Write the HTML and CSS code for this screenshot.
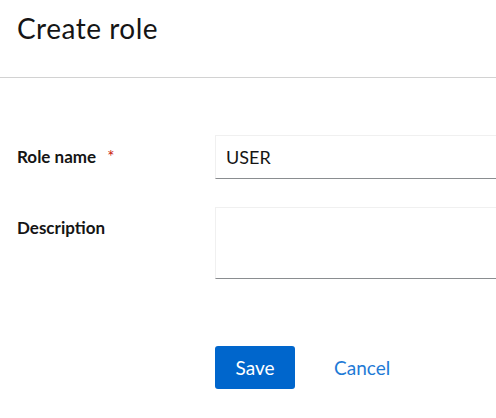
FILE: index.html
```html
<!DOCTYPE html>
<html lang="en">
<head>
<meta charset="utf-8">
<title>Create role</title>
<link rel="stylesheet" href="styles.css">
</head>
<body>
<header class="page-header">
  <h1 class="title">Create role</h1>
</header>
<main class="page-body">
  <form class="form">
    <div class="row">
      <label class="label" for="role-name">Role name <span class="req">*</span></label>
      <input class="input" id="role-name" type="text" value="USER">
    </div>
    <div class="row row-top">
      <label class="label" for="desc">Description</label>
      <textarea class="textarea" id="desc"></textarea>
    </div>
    <div class="actions">
      <button type="button" class="btn btn-primary">Save</button>
      <button type="button" class="btn btn-link">Cancel</button>
    </div>
  </form>
</main>
</body>
</html>
```
FILE: styles.css
```css
html, body {
  margin: 0;
  padding: 0;
  overflow: hidden;
  background: #fff;
  font-family: Lato, "Open Sans", sans-serif;
  color: #151515;
}
.page-header {
  height: 77px;
  border-bottom: 1px solid #d2d2d2;
  padding: 0 17px;
}
.title {
  margin: 0;
  padding-top: 10px;
  font-size: 28px;
  font-weight: 400;
  letter-spacing: 0.5px;
  line-height: 36px;
}
.page-body {
  padding: 57px 0 0 17px;
}
.form {
  display: flex;
  flex-direction: column;
  gap: 28px;
}
.row {
  display: grid;
  grid-template-columns: 198px 400px;
  align-items: center;
}
.row-top {
  align-items: start;
}
.row-top .label {
  padding-top: 9px;
}
.label {
  font-size: 17px;
  font-weight: 700;
  line-height: 24px;
}
.req {
  color: #c9190b;
  margin-left: 7px;
  font-weight: 400;
}
.input, .textarea {
  box-sizing: border-box;
  width: 400px;
  margin: 0;
  border: 1px solid #f0f0f0;
  border-bottom-color: #8a8d90;
  background: #fff;
  font-family: inherit;
  font-size: 18px;
  color: #151515;
  padding: 0 10px;
  outline: none;
}
.input {
  height: 44px;
}
.textarea {
  height: 72px;
  resize: none;
  display: block;
}
.actions {
  display: flex;
  margin-top: 39px;
  margin-left: 198px;
  align-items: center;
}
.btn {
  font-family: inherit;
  font-size: 19px;
  border: 0;
  height: 43px;
  border-radius: 3px;
  cursor: pointer;
}
.btn-primary {
  width: 80px;
  background: #0066cc;
  color: #fff;
}
.btn-link {
  background: transparent;
  color: #1f7ad6;
  padding: 0 20px;
  margin-left: 19px;
}
```
